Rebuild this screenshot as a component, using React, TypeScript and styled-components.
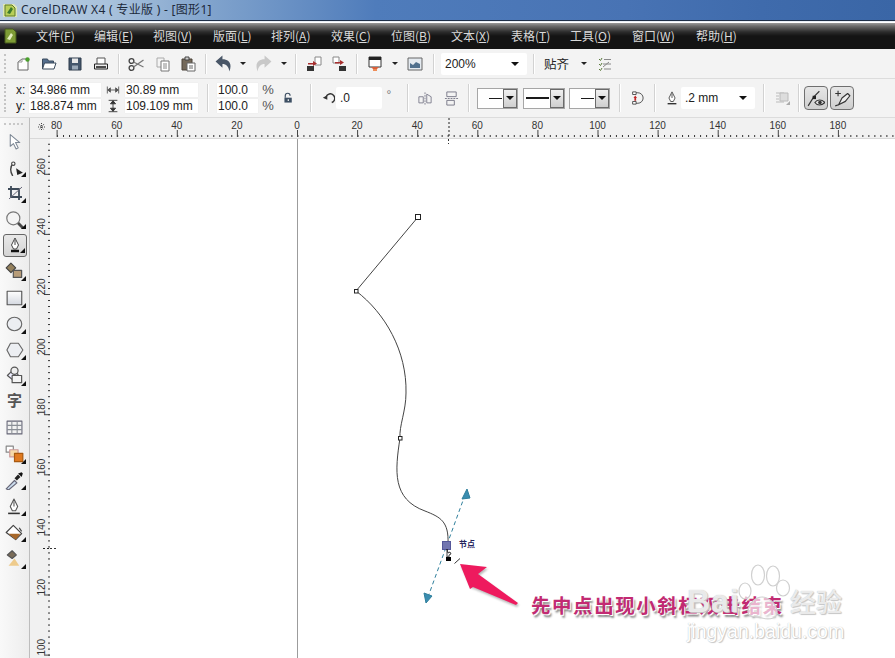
import React from "react";
import styled, { createGlobalStyle, css } from "styled-components";

const Global = createGlobalStyle`
  html, body { margin: 0; padding: 0; width: 895px; height: 658px; overflow: hidden; background: #fff; }
  body { font-family: "Liberation Sans", "Noto Sans CJK SC", sans-serif; }
`;

const Frame = styled.div`
  width: 895px; height: 658px; display: flex; flex-direction: column; overflow: hidden;
  font-family: "Liberation Sans", "Noto Sans CJK SC", sans-serif;
`;
const TitleBar = styled.header`
  height: 20px; flex: none; display: flex; align-items: center; gap: 3px; padding-left: 2px;
  background: linear-gradient(90deg, #b9cde0 0, #a9c2dc 12%, #7fa2cc 24%, #4f7cbb 42%, #4873b4 70%, #3f6bac 85%, #3a66a6 100%);
  border-bottom: 1px solid #1f3048;
  box-shadow: 0 1px 0 #e8eef6;
`;
const TitleText = styled.span`
  font: 12px/20px "Noto Sans", "Noto Sans CJK SC", sans-serif; color: #1d2a3c; letter-spacing: .3px;
`;
const MenuBar = styled.nav`
  height: 26px; flex: none; margin-top: 2px; display: flex; align-items: center; padding-left: 2px;
  background: linear-gradient(#9a9a9a 0, #6c6c6c 3px, #2c2c2c 9px, #141414 13px, #141414 100%);
`;
const MenuLogo = styled.span`
  width: 34px; flex: none; display: flex; align-items: center;
`;
const MenuItem = styled.span<{ $w: number }>`
  width: ${p => p.$w}px; flex: none; font: 12px/16px "Noto Sans CJK SC", sans-serif; color: #d9d9d9; white-space: nowrap;
  u { text-underline-offset: 1px; }
`;
const ToolRow = styled.div<{ $h: number }>`
  height: ${p => p.$h}px; flex: none; display: flex; align-items: center;
  background: #f3f3f3; border-bottom: 1px solid #dcdcdc; box-sizing: border-box;
`;
const Grip = styled.i<{ $w: number }>`
  width: ${p => p.$w}px; flex: none; align-self: stretch; position: relative;
  &::before { content: ""; position: absolute; left: 4px; top: 5px; bottom: 5px; border-left: 2px dotted #c4c4c4; }
`;
const Slot = styled.span<{ $w: number }>`
  width: ${p => p.$w}px; flex: none; display: flex; align-items: center; justify-content: center;
`;
const Degree = styled(Slot)`
  font-size: 12px; color: #777; margin-top: -6px;
`;
const Sep = styled.i<{ $w?: number; $h?: number }>`
  width: ${p => p.$w ?? 8}px; flex: none; height: ${p => p.$h ?? 20}px; display: flex; justify-content: center;
  &::before { content: ""; width: 1px; background: #d2d2d2; box-shadow: 1px 0 0 #fff; }
`;
const Drop = styled.span`
  width: 0; height: 0; border-left: 3px solid transparent; border-right: 3px solid transparent; border-top: 3px solid #222;
`;
const Combo = styled.div<{ $w: number; $ml?: number }>`
  width: ${p => p.$w}px; height: 22px; flex: none; margin-left: ${p => p.$ml ?? 0}px; box-sizing: border-box;
  display: flex; align-items: center; justify-content: space-between; padding: 0 8px 0 4px;
  background: #fff; border-radius: 2px; font-size: 12px; color: #222;
`;
const Arrow = styled.span`
  width: 0; height: 0; border-left: 4.5px solid transparent; border-right: 4.5px solid transparent; border-top: 4.5px solid #111;
`;
const Plain = styled.span<{ $w: number; $pl?: number }>`
  width: ${p => p.$w}px; flex: none; padding-left: ${p => p.$pl ?? 0}px; box-sizing: border-box;
  font: 12.5px/16px "Noto Sans CJK SC", sans-serif; color: #222;
`;
const Axis = styled.div`
  width: 28px; flex: none; display: grid; grid-auto-rows: 16px; padding-left: 16px; box-sizing: border-box;
  font: 12px/16px "Liberation Sans", sans-serif; color: #222;
`;
const FieldStack = styled.div<{ $w: number }>`
  width: ${p => p.$w}px; flex: none; display: grid; grid-auto-rows: 16px;
`;
const Field = styled.div`
  background: #fff; font: 12px/16px "Liberation Sans", sans-serif; color: #222; padding-left: 2px; border-radius: 1px;
  white-space: nowrap; box-shadow: inset 0 0 0 1px #f0f0f0;
`;
const IconStack = styled.div<{ $w: number }>`
  width: ${p => p.$w}px; flex: none; display: grid; grid-auto-rows: 16px; justify-items: center; align-items: center;
  font: 13px/16px "Liberation Sans", sans-serif; color: #555;
`;
const LineCombo = styled.div<{ $w: number; $ml: number; $lw: number }>`
  width: ${p => p.$w}px; height: 21px; flex: none; margin-left: ${p => p.$ml}px; box-sizing: border-box;
  border: 1px solid #a6a6a6; background: #fff; display: flex; align-items: center;
  &::before { content: ""; flex: 1; height: ${p => p.$lw}px; background: #1a1a1a; margin: 0 1px 0 ${p => (p.$lw > 1 ? 2 : 11)}px; }
`;
const LineArrow = styled.span`
  width: 14px; align-self: stretch; flex: none; box-sizing: border-box; display: flex; align-items: center; justify-content: center;
  background: linear-gradient(#f0f0f0, #cfcfcf); border: 1px solid #6b6b6b;
`;
const Toggle = styled.span`
  width: 24px; height: 24px; flex: none; margin-right: 2px; box-sizing: border-box; display: flex; align-items: center; justify-content: center;
  background: linear-gradient(#e6e6e6, #cfcfcf); border: 1px solid #6f6f6f; border-radius: 4px;
`;
const Work = styled.div`
  flex: 1; min-height: 0; display: flex;
`;
const Toolbox = styled.aside`
  width: 30px; flex: none; box-sizing: border-box; padding-top: 10px; position: relative;
  background: linear-gradient(90deg, #f9f9f9, #ededed); border-right: 1px solid #bdbdbd;
  display: flex; flex-direction: column; align-items: center;
  &::before { content: ""; position: absolute; left: 4px; right: 6px; top: 5px; border-top: 2px dotted #c8c8c8; }
`;
const ToolButton = styled.span<{ $fly?: boolean; $on?: boolean }>`
  width: 24px; height: 26.1px; flex: none; position: relative; display: flex; align-items: center; justify-content: center;
  ${p => p.$fly && css`
    &::after { content: ""; position: absolute; right: 1px; bottom: 3px; width: 0; height: 0;
      border-left: 5px solid transparent; border-bottom: 5px solid #111; }
  `}
  ${p => p.$on && css`
    box-sizing: border-box; height: 23px; margin: 1.5px 0; background: linear-gradient(#e8e8e8, #d4d4d4);
    border: 1px solid #666; border-radius: 3px;
  `}
`;
const ToolGlyph = styled.span`
  font: 700 15px/16px "Noto Sans CJK SC", sans-serif; color: #555; margin-top: -3px;
`;
const Stage = styled.div`
  flex: 1; min-width: 0; display: flex; flex-direction: column; background: #f1f1f1;
`;
const HRuler = styled.svg`
  width: 865px; height: 21px; flex: none; display: block;
`;
const StageBody = styled.div`
  flex: 1; min-height: 0; display: flex;
`;
const VRuler = styled.svg`
  width: 20px; height: 520px; flex: none; display: block;
`;
const Canvas = styled.main`
  flex: 1; position: relative; background: #fff; overflow: hidden;
`;
const Drawing = styled.svg`
  position: absolute; inset: 0; width: 845px; height: 520px;
`;
const Note = styled.div`
  position: absolute; left: 481px; top: 453px; white-space: nowrap;
  font: 700 19.5px/26px "Noto Sans CJK SC", sans-serif; letter-spacing: 1.55px; color: #c22a72;
  text-shadow: 1px 1px 0 #fff, 2px 3px 2px #8a8a8a;
`;
const Mark = styled.div`
  position: absolute; left: 637px; top: 445px; color: rgba(255, 255, 255, .72); white-space: nowrap;
  text-shadow: 0 0 1px #b4b4b4, 1px 1px 1px #c8c8c8;
`;
const MarkBrand = styled.div`
  display: flex; align-items: center; height: 34px;
`;
const MarkLatin = styled.span`
  width: 103px; font: 700 32px/34px "Liberation Sans", sans-serif; letter-spacing: 1px;
`;
const MarkCjk = styled.span`
  font: 500 26px/34px "Noto Sans CJK SC", sans-serif;
`;
const MarkUrl = styled.div`
  font: 19.5px/24px "Liberation Sans", sans-serif; margin-top: 1px; color: #fff;
`;

const Ic = ({ s = 16, children }: { s?: number; children: React.ReactNode }) => (
  <svg width={s} height={s} viewBox="0 0 16 16" fill="none" strokeLinejoin="round">{children}</svg>
);

const I = {
  App: () => <Ic><path d="M1 2h11l3 3v10H1z" fill="#dfe8b4" /><path d="M3 3h7l3 3v8H3z" fill="#b8cf58" stroke="#5f7a28" /><path d="M5 11l4-6 2 2-3 5z" fill="#3c7a2c" /></Ic>,
  Logo: () => <Ic><path d="M3 1h8l3 3v11H3z" fill="#7e9c36" stroke="#44581c" /><path d="M5 11l4-6 2 2-3 5z" fill="#e4eec0" /></Ic>,
  New: () => <Ic><path d="M3 14V6l4-3h6v11z" fill="#fff" stroke="#666" /><path d="M3 6h4V3" stroke="#999" /><circle cx="12.500" cy="3.500" r="2.200" fill="#4aa02c" /></Ic>,
  Open: () => <Ic><path d="M1.500 13V3h5l1 2h5v2" fill="#556f8e" stroke="#3a4a5c" /><path d="M1.500 13l2-6H15l-2 6z" fill="#fff" stroke="#3a4a5c" /></Ic>,
  Save: () => <Ic><path d="M2 2h12v12H2z" fill="#44566c" stroke="#2e3c4c" /><rect x="5" y="2.500" width="6" height="4.500" fill="#e8e8e8" /><rect x="5" y="9.500" width="6" height="4" fill="#9aa8b8" /></Ic>,
  Print: () => <Ic><path d="M4 8V2h8v6" fill="#fff" stroke="#555" /><path d="M1.500 8h13v5h-13z" fill="#eee" stroke="#222" /><path d="M3 11h10" stroke="#222" strokeWidth="1.600" /></Ic>,
  Cut: () => <Ic><circle cx="3.500" cy="12" r="2.400" stroke="#444" strokeWidth="1.300" /><circle cx="3.500" cy="5" r="2.400" stroke="#444" strokeWidth="1.300" /><path d="M5.500 6l10 5M5.500 11l10-7" stroke="#777" strokeWidth="1.300" /></Ic>,
  Copy: () => <Ic><path d="M2 2h7v9H2z" fill="#f4f4f4" stroke="#aaa" /><path d="M6 5h8v10H6z" fill="#fff" stroke="#777" /><path d="M8 8h4M8 10h4M8 12h4" stroke="#888" /></Ic>,
  Paste: () => <Ic><path d="M2 3h10v11H2z" fill="#74695a" stroke="#4a4238" /><rect x="5" y="1" width="4" height="3" fill="#ccc" stroke="#444" /><path d="M7 7h8v8H7z" fill="#fff" stroke="#666" /><path d="M9 10h4M9 12h4" stroke="#666" /></Ic>,
  Undo: () => <Ic s={17}><path d="M0.500 6L7 0.500V4c6 0 9.500 4 6.500 11.500C13 11 10.500 8.500 7 8.500V12z" fill="#4a5768" /></Ic>,
  Redo: () => <Ic s={17}><path d="M15.500 6L9 0.500V4C3 4-0.500 8 2.500 15.500 3 11 5.500 8.500 9 8.500V12z" fill="#c8c8c8" /></Ic>,
  Import: () => <Ic><rect x="1" y="10" width="7" height="5" fill="#333" /><path d="M9 1h6v8H9z" fill="#fff" stroke="#888" /><path d="M2 7h5V5l4 2.500L7 10V8.500H2z" fill="#a83030" /></Ic>,
  Export: () => <Ic><path d="M2 1h6v6H2z" fill="#fff" stroke="#888" /><rect x="8" y="10" width="7" height="5" fill="#333" /><path d="M4 6h5V4l4 2.500L9 9V7.500H4z" fill="#a83030" /></Ic>,
  Publish: () => <Ic><rect x="2" y="1" width="12" height="10" fill="#fff" stroke="#333" /><rect x="2" y="1" width="12" height="3" fill="#222" /><path d="M4 11h8l-2 2h-4z" fill="#d8603c" /><path d="M6 13h4v2H6z" fill="#ef8d58" /></Ic>,
  Welcome: () => <Ic><rect x="1" y="2" width="14" height="12" fill="#e4eaf0" stroke="#666" /><path d="M3 12V7l3 2 3-3 4 2v4z" fill="#50708e" /></Ic>,
  Check: () => <Ic><path d="M2 3l1.500 1.500L5 2M2 8l1.500 1.500L5 7M2 13l1.500 1.500L5 12" stroke="#5b7a3c" /><path d="M7 3.500h7M6 8h8M7 13h7M12 6l-6 5" stroke="#888" /></Ic>,
  Width: () => <Ic s={14}><path d="M1.500 4v8M14.500 4v8M2 8h12M2 8l3-2.500v5zM14 8l-3-2.500v5z" stroke="#555" fill="#555" /></Ic>,
  Height: () => <Ic s={14}><path d="M3 1.500h10M3 14.500h10M8 2v12M8 2L5 5.500h6zM8 14l-3-3.500h6z" stroke="#333" fill="#333" /></Ic>,
  Lock: () => <Ic s={13}><path d="M4 7V4.500a3 3 0 0 1 6 0" stroke="#3d4f63" strokeWidth="1.400" /><rect x="3" y="7" width="9" height="6" fill="#3d4f63" /><rect x="7" y="9" width="1.500" height="2" fill="#fff" /></Ic>,
  Rotate: () => <Ic s={13}><path d="M12 13a5.500 5.500 0 1 0-7-7" stroke="#333" strokeWidth="1.800" /><path d="M1 7l5.500-3v5.500z" fill="#333" /></Ic>,
  Mirror: () => <Ic s={15}><path d="M1 13V6h5v7zM10 13V3l5 3v7z" stroke="#778" /><path d="M8 1v14" stroke="#778" strokeDasharray="2 1" /></Ic>,
  Flip: () => <Ic s={15}><path d="M3 1h10v5H3zM3 10h8v5H3z" stroke="#778" /><path d="M1 8h14" stroke="#778" strokeDasharray="2 1" /></Ic>,
  Order: () => <Ic s={14}><path d="M5 2h4a5 5 0 0 1 0 12H5" stroke="#444" /><rect x="3" y="1" width="4" height="3" fill="#fff" stroke="#444" /><rect x="3" y="12" width="4" height="3" fill="#fff" stroke="#444" /><path d="M6 5l2 3H7v3H5V8H4z" fill="#c02828" /></Ic>,
  Nib: () => <Ic s={14}><path d="M8 1l3.500 7L9.500 12h-3L4.500 8z" fill="#fff" stroke="#444" /><path d="M8 3v5" stroke="#444" /><path d="M3 14.500h10" stroke="#333" strokeWidth="1.600" /></Ic>,
  Shadow: () => <Ic><path d="M1 3h8M1 6h3M1 9h3M1 12h8" stroke="#bbb" /><rect x="5" y="3" width="8" height="8" fill="#ddd" stroke="#bbb" /><path d="M15 11v4h-4z" fill="#aaa" /></Ic>,
  Eye: () => <Ic s={18}><path d="M1 15L6 7l5-5" stroke="#333" /><rect x="5" y="6" width="3" height="3" fill="#222" /><path d="M7 12c2-3 6-3 9 0-3 3-7 3-9 0z" fill="#ddd" stroke="#333" /><circle cx="11.500" cy="12" r="1.600" fill="#333" /></Ic>,
  PenPlus: () => <Ic s={18}><path d="M2 4h5M4.500 1.500v5" stroke="#333" /><path d="M5 14l3-6 5-4 2 2-4 5z" fill="#eee" stroke="#333" /><path d="M2 15l3-1" stroke="#333" /></Ic>,
  Pick: () => <Ic s={17}><path d="M4 1.500v11l3-2.500 2.500 5 2-1-2.500-5h4z" fill="#fff" stroke="#7c8794" /></Ic>,
  ShapeT: () => <Ic s={18}><path d="M6 16c-3-5-2-9 1-12" stroke="#444" strokeWidth="1.200" /><circle cx="6.500" cy="5" r="1.500" fill="#fff" stroke="#444" /><path d="M9 9l6 4-5 2z" fill="#222" /></Ic>,
  Crop: () => <Ic s={16}><path d="M1 4h11v11M4 1v11h11" stroke="#3d4a58" strokeWidth="1.800" /><path d="M2 14L15 2" stroke="#667" /></Ic>,
  Zoom: () => <Ic s={19}><circle cx="7" cy="7" r="5.500" fill="#f4f4f4" stroke="#777" /><path d="M11 11l5 5" stroke="#4a4a4a" strokeWidth="2.400" /></Ic>,
  Pen: () => <Ic s={16}><path d="M8 1l3.500 7-2 4h-3l-2-4z" fill="#fff" stroke="#444" /><path d="M8 3v5" stroke="#444" /><path d="M4 14h8" stroke="#111" strokeWidth="2.500" /></Ic>,
  Smart: () => <Ic s={19}><path d="M1 5l4-4 4 4-4 4z" fill="#94805c" stroke="#444" /><rect x="7" y="7" width="7" height="6" fill="#b79c78" stroke="#555" /></Ic>,
  Rect: () => <Ic s={18}><defs><linearGradient id="rg" x1="0" y1="0" x2="0" y2="1"><stop offset="0" stopColor="#fff" /><stop offset="1" stopColor="#d4d8e0" /></linearGradient></defs><rect x="1" y="2" width="13" height="12" fill="url(#rg)" stroke="#555" /></Ic>,
  Ellipse: () => <Ic s={18}><ellipse cx="7.500" cy="8" rx="6.500" ry="6" fill="#eceef2" stroke="#666" /></Ic>,
  Poly: () => <Ic s={18}><path d="M4 2h7l4 6-4 6H4L0.800 8z" fill="#eceef2" stroke="#666" /></Ic>,
  Basic: () => <Ic s={19}><path d="M2 8l5-5 4 4-4 5z" fill="#eef" stroke="#555" /><circle cx="8" cy="4" r="3" fill="#eee" stroke="#555" /><rect x="6" y="8" width="8" height="6" fill="#f4f4f4" stroke="#555" /></Ic>,
  Grid: () => <Ic s={17}><rect x="1" y="2" width="14" height="12" fill="#f2f2f2" stroke="#667" /><path d="M1 6h14M1 10h14M5.500 2v12M10.500 2v12" stroke="#8a8f96" /></Ic>,
  Blend: () => <Ic s={19}><rect x="1" y="1" width="6" height="5" fill="#fff" stroke="#888" /><rect x="4" y="4" width="7" height="6" fill="#f6d9a8" stroke="#c99" /><rect x="8" y="7" width="7" height="7" fill="#e07a20" stroke="#a85a10" /></Ic>,
  Drop: () => <Ic s={19}><path d="M1 15l7-7 2 2-7 6z" fill="#cde" stroke="#667" /><path d="M8 6l3-3 2 2-3 3z" fill="#222" /><path d="M11 2l3-1 1 1-1 3z" fill="#111" /></Ic>,
  Outline: () => <Ic s={17}><path d="M7.500 1l3.500 7-2 4H6L4 8z" fill="#fff" stroke="#555" /><path d="M7.500 3v5" stroke="#555" /><path d="M2 14.500h11" stroke="#333" strokeWidth="1.500" /></Ic>,
  Fill: () => <Ic s={19}><path d="M1 8l6-6 7 7-5 5z" fill="#fff" stroke="#444" /><path d="M3 9h10l-4 5z" fill="#a8682a" /><path d="M12 4l2 3" stroke="#444" /></Ic>,
  Inter: () => <Ic s={19}><path d="M2 5l4-3.500L9.500 5 6 8z" fill="#7a6c58" stroke="#555" /><path d="M8 8l4 6H3z" fill="#eecb8c" /></Ic>,
};

const X0 = 297 - 29 - 1;
const scale = 3.005;

const Horizontal = () => {
  const labels = [80, 60, 40, 20, 0, 20, 40, 60, 80, 100, 120, 140, 160, 180];
  const minor = Array.from({ length: 150 }, (_, i) => X0 - 240 + i * 6.01);
  return (
    <HRuler viewBox="0 0 865 21">
      <rect width="865" height="21" fill="#f1f1f1" />
      <path d="M8 9h7M11.500 5v8M9 6l5 6M14 6l-5 6" stroke="#444" strokeDasharray="1 1" />
      {minor.map(x => x > 20 && <rect key={x} x={x} y={17} width={1} height={2} fill="#333" />)}
      {labels.map((v, i) => {
        const x = X0 + (i - 4) * 20 * scale;
        return (
          <g key={i}>
            <rect x={x} y={12} width={1} height={7} fill="#444" />
            <text x={x} y={11} fontSize="10" textAnchor="middle" fill="#333" fontFamily="Liberation Sans">{v}</text>
          </g>
        );
      })}
      <path d="M419 0v21" stroke="#222" strokeDasharray="2 2" />
      <path d="M0 20.500h865" stroke="#d8d8d8" />
    </HRuler>
  );
};

const Vertical = () => {
  const labels = [260, 240, 220, 200, 180, 160, 140, 120, 100];
  const tickY = (v: number) => 293 - 138 + (220 - v) * scale;
  const minor = Array.from({ length: 90 }, (_, i) => tickY(270) + i * 6.01);
  return (
    <VRuler viewBox="0 0 20 520">
      <rect width="20" height="520" fill="#f1f1f1" />
      {minor.map(y => <rect key={y} x={18} y={y} width={2} height={1} fill="#333" />)}
      {labels.map(v => {
        const y = tickY(v);
        return (
          <g key={v}>
            <rect x={14} y={y} width={6} height={1} fill="#444" />
            <text transform={`translate(15 ${y + 1}) rotate(-90)`} fontSize="10" fill="#333" fontFamily="Liberation Sans">{v}</text>
          </g>
        );
      })}
      <path d="M13 409.500h7" stroke="#222" strokeDasharray="2 2" />
    </VRuler>
  );
};

const Art = () => (
  <Drawing viewBox="50 138 845 520">
    <defs>
      <filter id="blur" x="-20%" y="-20%" width="140%" height="140%"><feGaussianBlur stdDeviation="1.200" /></filter>
    </defs>
    <path d="M297.500 138V658" stroke="#9c9c9c" />
    <path d="M50 547.500h6" stroke="#333" strokeDasharray="2 2" />
    <path d="M448.500 138v5" stroke="#333" strokeDasharray="2 2" />
    <path d="M418 216L356 290C385 312 407 350 406 392C406 410 399 425 400 437C395 470 392 498 425 510C440 516 449 520 448 543" stroke="#444" fill="none" />
    <rect x="415.500" y="213.500" width="5" height="5" fill="#fff" stroke="#222" />
    <rect x="354.500" y="288.500" width="3.500" height="3.500" fill="#fff" stroke="#222" />
    <rect x="398.500" y="435.500" width="3.500" height="3.500" fill="#fff" stroke="#222" />
    <path d="M465 494L428 596" stroke="#2f7f9c" strokeDasharray="4 3" />
    <path d="M467 488L462 498 470 497z" fill="#3a8db0" stroke="#2f7f9c" />
    <path d="M426 602L424 592 432 595z" fill="#3a8db0" stroke="#2f7f9c" />
    <rect x="442.500" y="540.500" width="8" height="8" fill="#7276b0" stroke="#55589a" />
    <path d="M447 548l1 4 2-1 1 2-2 1v2h-2z" fill="#fff" stroke="#111" strokeWidth=".8" />
    <rect x="446" y="556" width="5" height="4" fill="#000" />
    <path d="M454.500 562.500l5.500-5" stroke="#333" />
    <text x="459" y="546" fontSize="8" fontWeight="700" fill="#23235a" fontFamily="Noto Sans CJK SC">节点</text>
    <path d="M461 565L488 568 479 575 519 604 517 606 474 588 471 587z" fill="#888" opacity=".6" filter="url(#blur)" />
    <path d="M460 563L487 566 478 573 518 602 516 604 473 586 470 588z" fill="#ee1a5e" />
  </Drawing>
);

const Paw = () => (
  <Drawing viewBox="50 138 845 520">
    <g fill="rgba(255,255,255,.65)" stroke="#d0d0d0" strokeWidth="1.200">
      <ellipse cx="758" cy="574" rx="6.500" ry="10" />
      <ellipse cx="773" cy="575" rx="6.500" ry="10" />
      <ellipse cx="783" cy="587" rx="6.500" ry="8" />
      <ellipse cx="745" cy="590" rx="6" ry="8" />
      <path d="M748 610c1-8 8-14 14-14s14 6 15 14-8 9-15 7-15 0-14-7z" />
    </g>
  </Drawing>
);

export default function App() {
  const menus: [string, string, number][] = [["文件", "F", 58], ["编辑", "E", 59], ["视图", "V", 60], ["版面", "L", 58], ["排列", "A", 60], ["效果", "C", 60], ["位图", "B", 60], ["文本", "X", 60], ["表格", "T", 59], ["工具", "O", 62], ["窗口", "W", 64], ["帮助", "H", 60]];
  const tools: [keyof typeof I, boolean, boolean?][] = [
    ["Pick", false], ["ShapeT", true], ["Crop", true], ["Zoom", true], ["Pen", true, true], ["Smart", true], ["Rect", true],
    ["Ellipse", true], ["Poly", true], ["Basic", true],
  ];
  const tools2: [keyof typeof I, boolean][] = [["Grid", false], ["Blend", true], ["Drop", true], ["Outline", true], ["Fill", true], ["Inter", true]];
  const renderTool = ([n, fly, on]: [keyof typeof I, boolean, boolean?]) => {
    const C = I[n];
    return <ToolButton key={n} $fly={fly} $on={on}><C /></ToolButton>;
  };
  return (
    <Frame>
      <Global />
      <TitleBar>
        <I.App />
        <TitleText>CorelDRAW X4 ( 专业版 ) - [图形1]</TitleText>
      </TitleBar>
      <MenuBar>
        <MenuLogo><I.Logo /></MenuLogo>
        {menus.map(([a, k, w]) => <MenuItem key={k} $w={w}>{a}(<u>{k}</u>)</MenuItem>)}
      </MenuBar>
      <ToolRow $h={30}>
        <Grip $w={9} />
        <Slot $w={27}><I.New /></Slot>
        <Slot $w={26}><I.Open /></Slot>
        <Slot $w={26}><I.Save /></Slot>
        <Slot $w={26}><I.Print /></Slot>
        <Sep />
        <Slot $w={28}><I.Cut /></Slot>
        <Slot $w={25}><I.Copy /></Slot>
        <Slot $w={26}><I.Paste /></Slot>
        <Sep />
        <Slot $w={29}><I.Undo /></Slot>
        <Slot $w={10}><Drop /></Slot>
        <Slot $w={31}><I.Redo /></Slot>
        <Slot $w={10}><Drop /></Slot>
        <Sep $w={12} />
        <Slot $w={26}><I.Import /></Slot>
        <Slot $w={24}><I.Export /></Slot>
        <Sep $w={10} />
        <Slot $w={28}><I.Publish /></Slot>
        <Slot $w={12}><Drop /></Slot>
        <Slot $w={28}><I.Welcome /></Slot>
        <Sep $w={9} />
        <Combo $w={86} $ml={3}>200%<Arrow /></Combo>
        <Sep $w={13} />
        <Plain $w={37} $pl={4}>贴齐</Plain>
        <Slot $w={14}><Drop /></Slot>
        <Slot $w={28}><I.Check /></Slot>
      </ToolRow>
      <ToolRow $h={39}>
        <Grip $w={0} />
        <Axis><span>x:</span><span>y:</span></Axis>
        <FieldStack $w={74}><Field>34.986 mm</Field><Field>188.874 mm</Field></FieldStack>
        <IconStack $w={22}><I.Width /><I.Height /></IconStack>
        <FieldStack $w={75}><Field>30.89 mm</Field><Field>109.109 mm</Field></FieldStack>
        <Sep $w={17} $h={28} />
        <FieldStack $w={43}><Field>100.0</Field><Field>100.0</Field></FieldStack>
        <IconStack $w={18}><span>%</span><span>%</span></IconStack>
        <Slot $w={22}><I.Lock /></Slot>
        <Sep $w={22} $h={28} />
        <Slot $w={15}><I.Rotate /></Slot>
        <Combo $w={46}>.0</Combo>
        <Degree $w={14}>°</Degree>
        <Sep $w={22} $h={28} />
        <Slot $w={14}><I.Mirror /></Slot>
        <Slot $w={6} />
        <Slot $w={26}><I.Flip /></Slot>
        <Sep $w={8} $h={28} />
        <LineCombo $w={41} $ml={5} $lw={1}><LineArrow><Arrow /></LineArrow></LineCombo>
        <LineCombo $w={42} $ml={5} $lw={2}><LineArrow><Arrow /></LineArrow></LineCombo>
        <LineCombo $w={41} $ml={4} $lw={1}><LineArrow><Arrow /></LineArrow></LineCombo>
        <Sep $w={18} $h={28} />
        <Slot $w={18}><I.Order /></Slot>
        <Sep $w={16} $h={28} />
        <Slot $w={19}><I.Nib /></Slot>
        <Combo $w={74}>.2 mm<Arrow /></Combo>
        <Sep $w={16} $h={28} />
        <Slot $w={24}><I.Shadow /></Slot>
        <Sep $w={6} $h={28} />
        <Slot $w={3} />
        <Toggle><I.Eye /></Toggle>
        <Toggle><I.PenPlus /></Toggle>
      </ToolRow>
      <Work>
        <Toolbox>
          {tools.map(renderTool)}
          <ToolButton><ToolGlyph>字</ToolGlyph></ToolButton>
          {tools2.map(t => renderTool(t))}
        </Toolbox>
        <Stage>
          <Horizontal />
          <StageBody>
            <Vertical />
            <Canvas>
              <Art />
              <Note>先中点出现小斜杠双击结束</Note>
              <Paw />
              <Mark>
                <MarkBrand><MarkLatin>Bai</MarkLatin><MarkCjk>经验</MarkCjk></MarkBrand>
                <MarkUrl>jingyan.baidu.com</MarkUrl>
              </Mark>
            </Canvas>
          </StageBody>
        </Stage>
      </Work>
    </Frame>
  );
}
